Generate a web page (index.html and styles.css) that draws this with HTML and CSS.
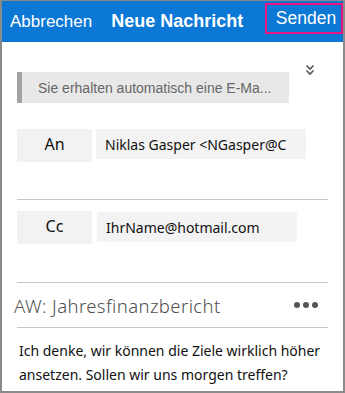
FILE: index.html
```html
<!DOCTYPE html>
<html lang="de">
<head>
<meta charset="utf-8">
<link rel="stylesheet" href="styles.css">
</head>
<body>
<div class="frame">
  <header class="topbar">
    <span class="cancel">Abbrechen</span>
    <span class="title">Neue Nachricht</span>
    <span class="send">Senden</span>
  </header>
  <main class="content">
    <div class="notice-row">
      <div class="notice">Sie erhalten automatisch eine E-Ma...</div>
      <svg class="chev" width="10" height="12" viewBox="0 0 10 12">
        <path d="M1.5 1.5 L5 5 L8.5 1.5 M1.5 6.5 L5 10 L8.5 6.5" fill="none" stroke="#555" stroke-width="1.6"/>
      </svg>
    </div>
    <div class="field-row to-row">
      <div class="label">An</div>
      <div class="value to-value">Niklas Gasper &lt;NGasper@C</div>
    </div>
    <div class="divider"></div>
    <div class="field-row cc-row">
      <div class="label">Cc</div>
      <div class="value cc-value">IhrName@hotmail.com</div>
    </div>
    <div class="divider"></div>
    <div class="subject-row">
      <span class="subject"><span class="aw">AW:</span> Jahresfinanzbericht</span>
      <span class="dots"><i></i><i></i><i></i></span>
    </div>
    <div class="divider"></div>
    <p class="body-text">Ich denke, wir können die Ziele wirklich höher ansetzen. Sollen wir uns morgen treffen?</p>
  </main>
</div>
</body>
</html>
```

FILE: styles.css
```css
html, body {
  margin: 0;
  padding: 0;
  background: #ffffff;
}
.frame {
  box-sizing: border-box;
  width: 345px;
  height: 393px;
  border: 2px solid #8a8a8a;
  border-top-width: 1px;
  overflow: hidden;
  display: flex;
  flex-direction: column;
  background: #fff;
}
.topbar {
  height: 41px;
  flex: 0 0 41px;
  background: #0a78d4;
  color: #fff;
  display: flex;
  align-items: center;
  font-family: "Liberation Sans", Arial, sans-serif;
  font-size: 17px;
}
.cancel {
  margin-left: 8px;
}
.title {
  margin-left: 19px;
  font-weight: bold;
  font-size: 18px;
}
.send {
  margin-left: auto;
  margin-right: 0;
  box-sizing: border-box;
  width: 78px;
  height: 31px;
  margin-top: -6px;
  border: 2px solid #e8157f;
  display: flex;
  align-items: center;
  justify-content: center;
  padding-left: 4px;
  font-size: 17.5px;
}
.content {
  padding: 0 15px 0 15px;
  font-family: "Noto Sans", "Open Sans", sans-serif;
  color: #1a1a1a;
}
.notice-row {
  display: flex;
  align-items: flex-start;
  margin-top: 22px;
}
.notice {
  box-sizing: border-box;
  margin-top: 8px;
  width: 272px;
  height: 31px;
  background: #e8e8e8;
  border-left: 5px solid #a3a3a3;
  color: #666;
  font-family: "Liberation Sans", Arial, sans-serif;
  font-size: 14px;
  display: flex;
  align-items: center;
  padding-left: 16px;
  white-space: nowrap;
}
.chev {
  margin-left: 16px;
  margin-top: 0;
}
.field-row {
  display: flex;
  align-items: flex-start;
  gap: 4px;
}
.to-row {
  margin-top: 26px;
}
.cc-row {
  margin-top: 11px;
}
.label {
  width: 75px;
  height: 33px;
  background: #f2f2f2;
  display: flex;
  align-items: center;
  justify-content: center;
  font-size: 16px;
  padding-bottom: 4px;
  box-sizing: border-box;
  color: #111;
}
.value {
  box-sizing: border-box;
  height: 30px;
  background: #f3f3f3;
  font-size: 14px;
  display: flex;
  align-items: center;
  padding-left: 9px;
  white-space: nowrap;
  overflow: hidden;
  color: #111;
}
.to-value {
  width: 210px;
}
.cc-value {
  width: 200px;
  margin-left: 1px;
  margin-top: 1px;
}
.divider {
  height: 1px;
  background: #c6c6c6;
  width: 311px;
  margin-top: 37px;
}
.cc-row + .divider {
  margin-top: 38px;
}
.subject-row {
  display: flex;
  align-items: center;
  height: 44px;
  margin-left: -3px;
}
.subject {
  font-size: 18.5px;
  font-weight: 300;
  color: #505050;
  letter-spacing: 0.4px;
}
.aw {
  color: #555;
}
.dots {
  margin-left: auto;
  margin-right: 10px;
  display: flex;
  gap: 3px;
}
.dots i {
  width: 6px;
  height: 6px;
  border-radius: 50%;
  background: #555;
}
.subject-row + .divider {
  margin-top: 0;
}
.body-text {
  margin: 11px 0 0 2px;
  font-size: 14px;
  line-height: 24px;
  color: #111;
}
```
